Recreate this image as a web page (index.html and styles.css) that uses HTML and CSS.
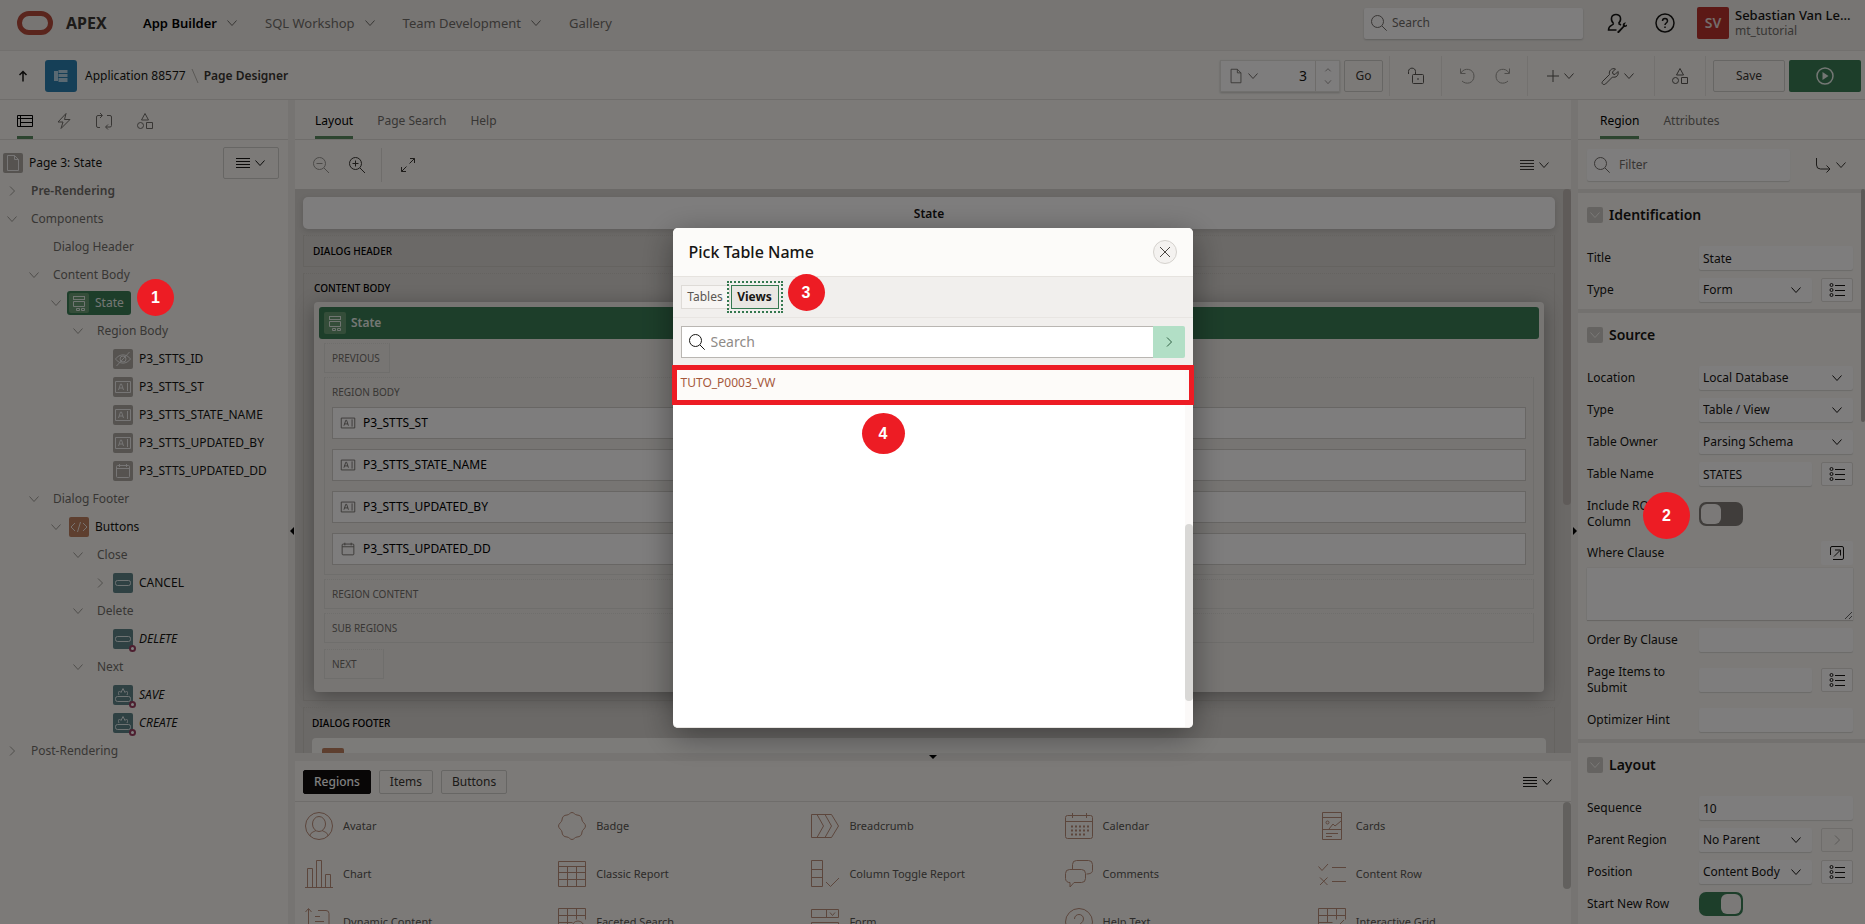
FILE: index.html
```html
<!DOCTYPE html>
<html lang="en">
<head>
<meta charset="utf-8">
<title>Page Designer</title>
<link rel="stylesheet" href="styles.css">
</head>
<body>
<svg class="defs" aria-hidden="true">
  <symbol id="chev" viewBox="0 0 12 12"><path d="M1.500 3.500l4.500 5 4.500-5"/></symbol>
  <symbol id="chev-r" viewBox="0 0 12 12"><path d="M4 1.500l4.500 4.500-4.500 4.500"/></symbol>
  <symbol id="chev-u" viewBox="0 0 12 12"><path d="M2 8l4-4 4 4"/></symbol>
  <symbol id="search" viewBox="0 0 16 16"><circle cx="6.500" cy="6.500" r="6"/><path d="M11 11l4.700 4.700"/></symbol>
  <symbol id="menu" viewBox="0 0 14 12"><path d="M0 1.500h14M0 4.500h14M0 7.500h14M0 10.500h14"/></symbol>
  <symbol id="shapes" viewBox="0 0 18 18"><path d="M9 1.500l3.500 6.500h-7zM10.500 10.500h6v6h-6z"/><circle cx="4.500" cy="13.500" r="3"/></symbol>
  <symbol id="list" viewBox="0 0 16 16"><circle cx="2.500" cy="3" r="1.500"/><circle cx="2.500" cy="8" r="1.500"/><circle cx="2.500" cy="13" r="1.500"/><path d="M6 3.500h10M6 8.500h10M6 13.500h10"/></symbol>
  <symbol id="t-form" viewBox="0 0 20 20"><path d="M4 3.500h12M4 6.500h12M4.500 3v4M15.500 3v4M4.500 8.500h11v5h-11zM7.500 15.500h3v2h-3zM12.500 15.500h3v2h-3z"/></symbol>
  <symbol id="t-text" viewBox="0 0 20 20"><path d="M2.500 4.500h15v11h-15zM14.500 6v8M5.500 13l2-6h1l2 6M6 11h4"/></symbol>
  <symbol id="t-hide" viewBox="0 0 20 20"><path d="M2.500 10c4-5.500 11-5.500 15 0-4 5.500-11 5.500-15 0zM3.500 17L16.500 3"/><circle cx="10" cy="10" r="3"/></symbol>
  <symbol id="t-date" viewBox="0 0 20 20"><path d="M4.500 4.500h11a1 1 0 0 1 1 1v10a1 1 0 0 1-1 1h-11a1 1 0 0 1-1-1v-10a1 1 0 0 1 1-1zM3.500 7.500h13M6.500 3v3M13.500 3v3"/></symbol>
  <symbol id="t-code" viewBox="0 0 20 20"><path d="M6 6l-4 4 4 4M14 6l4 4-4 4M11.500 5l-3 10"/></symbol>
  <symbol id="t-btn" viewBox="0 0 20 20"><rect x="2.500" y="7.500" width="15" height="5" rx="2"/></symbol>
  <symbol id="t-hot" viewBox="0 0 20 20"><rect x="2.500" y="11.500" width="15" height="5" rx="2"/><path d="M6 10c-1-2-.5-3 .5-4l1.500 1.500L10 3.500l2 4L13.500 6c1 1 1.500 2 .5 4"/></symbol>
  <symbol id="t-page" viewBox="0 0 20 20"><path d="M4.500 2.500h7l4 4v11h-11zM11.500 2.500v4h4"/></symbol>
</svg>

<div class="app">
  <header class="top">
    <svg class="logo" viewBox="0 0 36 24"><rect x="2.500" y="2.500" width="31" height="19" rx="9.500"/></svg>
    <span class="brand">APEX</span>
    <nav class="mainnav">
      <a href="#" class="on">App Builder<svg class="i12"><use href="#chev"/></svg></a>
      <a href="#">SQL Workshop<svg class="i12"><use href="#chev"/></svg></a>
      <a href="#">Team Development<svg class="i12"><use href="#chev"/></svg></a>
      <a href="#">Gallery</a>
    </nav>
    <label class="topsearch"><svg class="i16"><use href="#search"/></svg><input type="text" placeholder="Search" aria-label="Search"></label>
    <button class="plain admin" aria-label="Administration"><svg class="i20" viewBox="0 0 20 20"><path class="mid" d="M6.500 10.500C3 7 4 1.500 9 1.500s6 5.500 2.500 9M6.500 10.500c0 2-5 1.500-5 6.500h8M11.500 10.500l2.500 1.500"/><path class="fill" d="M10 19l6-6c-1-2 1-4 3-3.500l-1.500 2 1 1 2-1.500c.3 2-1.500 3.500-3.200 3l-5.800 6.500z"/></svg></button>
    <button class="plain help" aria-label="Help"><svg class="i20" viewBox="0 0 20 20"><circle class="mid" cx="10" cy="10" r="9"/><path class="mid" d="M7.500 8c0-3.500 5-3.500 5 0 0 2-2.500 2-2.500 4M10 13.500v1.500"/></svg></button>
    <div class="user"><span class="avatar">SV</span><span class="who"><b>Sebastian Van Le...</b><small>mt_tutorial</small></span></div>
  </header>

  <div class="bar">
    <button class="plain up" aria-label="Up"><svg class="i12" viewBox="0 0 12 12"><path class="mid" d="M6 11.500V1.500M2.500 5L6 1.500 9.500 5"/></svg></button>
    <span class="appicon"><svg viewBox="0 0 16 14"><rect x="1" y="2" width="4" height="10"/><rect x="5.500" y="1" width="9" height="3"/><rect x="5.500" y="5" width="9" height="3"/><rect x="5.500" y="9" width="9" height="4"/></svg></span>
    <a href="#" class="crumb">Application 88577</a>
    <svg class="slash" viewBox="0 0 8 16"><path d="M1 1l6 14"/></svg>
    <b class="crumb">Page Designer</b>
    <div class="tools">
      <div class="pagesel">
        <button class="plain" aria-label="Page"><svg class="i18"><use href="#t-page"/></svg><svg class="i12"><use href="#chev"/></svg></button>
        <input type="text" value="3" aria-label="Page number">
        <span class="spin"><svg class="i8"><use href="#chev-u"/></svg><svg class="i8"><use href="#chev"/></svg></span>
      </div>
      <button class="btn go">Go</button>
      <span class="tgroup w52"><svg class="i18" viewBox="0 0 18 18"><rect x="5.500" y="7.500" width="11" height="9" rx="1"/><path d="M8.500 7V4.500c0-4.500-7-4.500-7 0V7M11 11v2"/></svg></span>
      <span class="tgroup w86 faint"><svg class="i18" viewBox="0 0 18 18"><path d="M2.500 1.500v5h5M3 6c3-6 13-4.500 13 3s-8 9-12 5"/></svg><svg class="i18" viewBox="0 0 18 18"><path d="M15.500 1.500v5h-5M15 6C12 0 2 1.500 2 9s8 9 12 5"/></svg></span>
      <span class="tgroup w127"><span><svg class="i12" viewBox="0 0 12 12"><path d="M6 0v12M0 6h12"/></svg><svg class="i12"><use href="#chev"/></svg></span><span><svg class="i18" viewBox="0 0 18 18"><path d="M1.500 14.500l7-7c-1-3.500 2-7 6-5.500l-3 3 .5 2 2 .5 3-3c1 4-2 6.500-5.500 5.500l-7 7c-2 1.500-4.500-.5-3-2.500z"/></svg><svg class="i12"><use href="#chev"/></svg></span></span>
      <span class="tgroup w51"><svg class="i18"><use href="#shapes"/></svg></span>
      <span class="tgroup w8"></span>
      <button class="btn save">Save</button>
      <button class="run" aria-label="Run"><svg class="i18" viewBox="0 0 18 18"><circle class="mid" cx="9" cy="9" r="8"/><path class="fill" d="M6.500 5l6 4-6 4z"/></svg></button>
    </div>
  </div>

  <div class="panes">
    <aside class="left">
      <div class="tabs icons">
        <button class="on" aria-label="Rendering"><svg class="i16" viewBox="0 0 16 16"><path d="M.5 2.500h15v11H.500zM.5 5.500h15M3.500 2.500v11M3.500 9.500h12"/></svg></button>
        <button aria-label="Dynamic Actions"><svg class="i16" viewBox="0 0 16 16"><path d="M10 .5L2 9h5l-2 6.500L14 6.500H8.500z"/></svg></button>
        <button aria-label="Processing"><svg class="i18" viewBox="0 0 18 18"><path d="M5 15.500H3a1.500 1.500 0 0 1-1.500-1.500V5A1.500 1.500 0 0 1 3 3.500h4M5 1l2.500 2.500L5 6M12 3.500h3A1.500 1.500 0 0 1 16.500 5v8.500A1.500 1.500 0 0 1 15 15h-4M13 12.500L10.500 15l2.500 2.500"/></svg></button>
        <button aria-label="Shared Components"><svg class="i18"><use href="#shapes"/></svg></button>
      </div>
      <div class="tree">
        <div class="treehead"><span class="ic gray"><svg><use href="#t-page"/></svg></span>Page 3: State<button class="btn menu" aria-label="Menu"><svg class="ham"><use href="#menu"/></svg><svg class="i12"><use href="#chev"/></svg></button></div>
        <div class="n l1"><svg class="tg"><use href="#chev-r"/></svg><span class="t semi">Pre-Rendering</span></div>
        <div class="n l1"><svg class="tg"><use href="#chev"/></svg><span class="t">Components</span></div>
        <div class="n l2"><span class="tg"></span><span class="t">Dialog Header</span></div>
        <div class="n l2"><svg class="tg"><use href="#chev"/></svg><span class="t">Content Body</span></div>
        <div class="n l3"><svg class="tg"><use href="#chev"/></svg><span class="sel"><span class="ic lgreen"><svg><use href="#t-form"/></svg></span>State</span></div>
        <div class="n l4"><svg class="tg"><use href="#chev"/></svg><span class="t">Region Body</span></div>
        <div class="n l5"><span class="tg"></span><span class="ic gray"><svg><use href="#t-hide"/></svg></span>P3_STTS_ID</div>
        <div class="n l5"><span class="tg"></span><span class="ic gray"><svg><use href="#t-text"/></svg></span>P3_STTS_ST</div>
        <div class="n l5"><span class="tg"></span><span class="ic gray"><svg><use href="#t-text"/></svg></span>P3_STTS_STATE_NAME</div>
        <div class="n l5"><span class="tg"></span><span class="ic gray"><svg><use href="#t-text"/></svg></span>P3_STTS_UPDATED_BY</div>
        <div class="n l5"><span class="tg"></span><span class="ic gray"><svg><use href="#t-date"/></svg></span>P3_STTS_UPDATED_DD</div>
        <div class="n l2"><svg class="tg"><use href="#chev"/></svg><span class="t">Dialog Footer</span></div>
        <div class="n l3"><svg class="tg"><use href="#chev"/></svg><span class="ic orange"><svg><use href="#t-code"/></svg></span>Buttons</div>
        <div class="n l4"><svg class="tg"><use href="#chev"/></svg><span class="t">Close</span></div>
        <div class="n l5"><svg class="tg"><use href="#chev-r"/></svg><span class="ic teal"><svg><use href="#t-btn"/></svg></span>CANCEL</div>
        <div class="n l4"><svg class="tg"><use href="#chev"/></svg><span class="t">Delete</span></div>
        <div class="n l5"><span class="tg"></span><span class="ic teal cond"><svg><use href="#t-btn"/></svg></span><i>DELETE</i></div>
        <div class="n l4"><svg class="tg"><use href="#chev"/></svg><span class="t">Next</span></div>
        <div class="n l5"><span class="tg"></span><span class="ic teal cond"><svg><use href="#t-hot"/></svg></span><i>SAVE</i></div>
        <div class="n l5"><span class="tg"></span><span class="ic teal cond"><svg><use href="#t-hot"/></svg></span><i>CREATE</i></div>
        <div class="n l1"><svg class="tg"><use href="#chev-r"/></svg><span class="t">Post-Rendering</span></div>
      </div>
    </aside>
    <div class="split"><svg class="i8" viewBox="0 0 8 8"><path class="fill" d="M6 0v8L2 4z"/></svg></div>

    <main class="center">
      <div class="tabs">
        <button class="on">Layout</button><button>Page Search</button><button>Help</button>
      </div>
      <div class="toolbar">
        <button class="plain dim" aria-label="Zoom out"><svg class="i18" viewBox="0 0 18 18"><circle cx="7.500" cy="7.500" r="6"/><path d="M12 12l5 5M4.500 7.500h6"/></svg></button>
        <button class="plain" aria-label="Zoom in"><svg class="i18" viewBox="0 0 18 18"><circle cx="7.500" cy="7.500" r="6"/><path d="M12 12l5 5M4.500 7.500h6M7.500 4.500v6"/></svg></button>
        <span class="vr"></span>
        <button class="plain" aria-label="Expand"><svg class="i16" viewBox="0 0 16 16"><path d="M10 1.500h4.500V6M14.500 1.500l-5 5M6 14.500H1.500V10M1.500 14.500l5-5"/></svg></button>
        <button class="plain end" aria-label="Menu"><svg class="ham"><use href="#menu"/></svg><svg class="i12"><use href="#chev"/></svg></button>
      </div>
      <div class="canvas">
        <div class="sheet">
          <div class="pagetitle">State</div>
          <div class="slot">DIALOG HEADER</div>
          <div class="slot body">
            <span>CONTENT BODY</span>
            <div class="card">
              <div class="cardhead"><span class="ic big lgreen"><svg><use href="#t-form"/></svg></span>State</div>
              <div class="cardin">
                <div class="sub small">PREVIOUS</div>
                <div class="sub items">
                  <span>REGION BODY</span>
                  <div class="item"><svg class="i18"><use href="#t-text"/></svg>P3_STTS_ST</div>
                  <div class="item"><svg class="i18"><use href="#t-text"/></svg>P3_STTS_STATE_NAME</div>
                  <div class="item"><svg class="i18"><use href="#t-text"/></svg>P3_STTS_UPDATED_BY</div>
                  <div class="item"><svg class="i18"><use href="#t-date"/></svg>P3_STTS_UPDATED_DD</div>
                </div>
                <div class="sub">REGION CONTENT</div>
                <div class="sub">SUB REGIONS</div>
                <div class="sub small next">NEXT</div>
              </div>
            </div>
          </div>
          <div class="slot foot"><span>DIALOG FOOTER</span><div class="footcard"><span class="ic big orange"></span></div></div>
        </div>
        <div class="thumb"></div>
      </div>
      <div class="hsplit"><svg class="i8" viewBox="0 0 8 8"><path class="fill" d="M0 2h8L4 6z"/></svg></div>
      <section class="gallery">
        <div class="galhead">
          <button class="btn on">Regions</button><button class="btn">Items</button><button class="btn">Buttons</button>
          <button class="plain end" aria-label="Menu"><svg class="ham"><use href="#menu"/></svg><svg class="i12"><use href="#chev"/></svg></button>
        </div>
        <div class="galbody">
          <div class="grid">
            <div class="g"><svg viewBox="0 0 28 28"><circle cx="14" cy="14" r="13.500"/><ellipse cx="14" cy="12" rx="6.500" ry="7.500"/><path d="M5 24c0-3 3-4 6-5.500M23 24c0-3-3-4-6-5.500"/></svg>Avatar</div>
            <div class="g"><svg viewBox="0 0 28 28"><path d="M14 .5c2 0 3 2.500 5 2.500 3 0 5 2 5 5 0 2 3.500 3.500 3.500 6S24 18 24 20c0 3-2 5-5 5-2 0-3 2.500-5 2.500S11 25 9 25c-3 0-5-2-5-5 0-2-3.500-3.500-3.500-6S4 10 4 8c0-3 2-5 5-5 2 0 3-2.500 5-2.500z"/></svg>Badge</div>
            <div class="g"><svg viewBox="0 0 28 28"><path d="M.5 2.500h20l7 11.500-7 11.500H.500zM6 2.500L12.500 14 6 25.500M14 2.500L20.500 14 14 25.500"/></svg>Breadcrumb</div>
            <div class="g"><svg viewBox="0 0 28 28"><rect x=".5" y="3.500" width="27" height="23" rx="2"/><path d="M.5 9.500h27M7.500 1v5M21.500 1v5"/><path class="dots" d="M6 14.500h18M6 18.500h18M6 22.500h14"/></svg>Calendar</div>
            <div class="g"><svg viewBox="0 0 28 28"><path d="M4.500.5h19v27h-19zM4.500 5.500h19M4.500 17.500h19M8 21.500h12M8 24.500h6M11 17l4-5 2 2 6-5"/><circle cx="9.500" cy="10.500" r="1.500"/></svg>Cards</div>
            <div class="g"><svg viewBox="0 0 28 28"><path d="M0 27.500h28M2.500 27V8.500h5V27M11.500 27V.500h5V27M20.500 27V14.500h5V27"/></svg>Chart</div>
            <div class="g"><svg viewBox="0 0 28 28"><path d="M.5 1.500h27v25H.500zM.5 6.500h27M.5 12.500h27M.5 19.500h27M9.500 6.500v20M18.500 6.500v20"/></svg>Classic Report</div>
            <div class="g"><svg viewBox="0 0 28 28"><path d="M.5.5h11v26H.500zM.5 9.500h11M.5 17.500h11M15 22l4.500 4.500L28 18"/></svg>Column Toggle Report</div>
            <div class="g"><svg viewBox="0 0 28 28"><path d="M7.500 9.500v-5a4 4 0 0 1 4-4h12a4 4 0 0 1 4 4v6c0 2-2 3.500-6 3.500"/><path d="M4.500 9.500h12a4 4 0 0 1 4 4v5a4 4 0 0 1-4 4H9l-4 4.500v-4.500a4 4 0 0 1-4.500-4v-5a4 4 0 0 1 4-4z"/></svg>Comments</div>
            <div class="g"><svg viewBox="0 0 28 28"><path d="M.5 6.500L4 10.500l6-6.500M14 7.500h14M2 17.500l7.500 7.500M9.500 17.500L2 25M14 21.500h14"/></svg>Content Row</div>
            <div class="g"><svg viewBox="0 0 28 28"><path d="M3.500 28V1M.5 4l3-3.500 3 3.500M13 2.500h8a3 3 0 0 1 3 3V28M10 8.500h5M10 13.500h9"/></svg>Dynamic Content</div>
            <div class="g"><svg viewBox="0 0 28 28"><path d="M.5.5h27v11M.5.5v27M.5 7.500h27M.5 14.500h14M9.500.5v27M18.500.5v11"/><circle cx="20" cy="19" r="6"/></svg>Faceted Search</div>
            <div class="g"><svg viewBox="0 0 28 28"><path d="M.5 1.500h27v8H.500zM.5 14.500h27v8H.500zM15.500 1.500v8M19 4.500l2.500 3 2.500-3"/></svg>Form</div>
            <div class="g"><svg viewBox="0 0 28 28"><circle cx="14" cy="14" r="13.500"/><path d="M9.500 11c0-6 9-6 9 0 0 4-4.500 4-4.500 8"/></svg>Help Text</div>
            <div class="g"><svg viewBox="0 0 28 28"><path d="M.5.5h27v11M.5.5v27M.5 7.500h27M.5 14.500h14M9.500.5v14M18.500.5v11M18 20l8-8"/></svg>Interactive Grid</div>
          </div>
          <div class="thumb"></div>
        </div>
      </section>
    </main>
    <div class="split"><svg class="i8" viewBox="0 0 8 8"><path class="fill" d="M2 0v8l4-4z"/></svg></div>

    <aside class="right">
      <div class="tabs"><button class="on">Region</button><button>Attributes</button></div>
      <div class="toolbar filterbar">
        <label class="filter"><svg class="i16"><use href="#search"/></svg><input type="text" placeholder="Filter" aria-label="Filter"></label>
        <button class="plain end" aria-label="Go to group"><svg class="i16" viewBox="0 0 16 16"><path d="M1.500 1v7a4 4 0 0 0 4 4H15M11.500 8.500L15 12l-3.500 3.500"/></svg><svg class="i12"><use href="#chev"/></svg></button>
      </div>
      <div class="props">
        <section>
          <h2><span class="fold"><svg class="i12"><use href="#chev"/></svg></span>Identification</h2>
          <div class="row"><label for="f1">Title</label><input id="f1" type="text" value="State"></div>
          <div class="row"><label for="f2">Type</label><span class="selw"><select id="f2"><option>Form</option></select><svg class="i12"><use href="#chev"/></svg></span><button class="ib" aria-label="Pick type"><svg class="i16"><use href="#list"/></svg></button></div>
        </section>
        <section>
          <h2><span class="fold"><svg class="i12"><use href="#chev"/></svg></span>Source</h2>
          <div class="row"><label for="f3">Location</label><span class="selw"><select id="f3"><option>Local Database</option></select><svg class="i12"><use href="#chev"/></svg></span></div>
          <div class="row"><label for="f4">Type</label><span class="selw"><select id="f4"><option>Table / View</option></select><svg class="i12"><use href="#chev"/></svg></span></div>
          <div class="row"><label for="f5">Table Owner</label><span class="selw"><select id="f5"><option>Parsing Schema</option></select><svg class="i12"><use href="#chev"/></svg></span></div>
          <div class="row"><label for="f6">Table Name</label><input id="f6" type="text" value="STATES"><button class="ib" aria-label="Pick table"><svg class="i16"><use href="#list"/></svg></button></div>
          <div class="row tall"><label for="f7">Include ROWID Column</label><input id="f7" type="checkbox" class="switch"></div>
          <div class="row where"><label for="f8">Where Clause</label><span class="gap"></span><button class="ib soft" aria-label="Open code editor"><svg class="i16" viewBox="0 0 16 16"><path d="M4 14.500h9a1.500 1.500 0 0 0 1.500-1.500V3A1.500 1.500 0 0 0 13 1.500H3A1.500 1.500 0 0 0 1.500 3v7M5 11.500l6-6M6 5h5.500v5.500"/></svg></button></div>
          <textarea id="f8"></textarea>
          <div class="row"><label for="f9">Order By Clause</label><input id="f9" type="text"></div>
          <div class="row tall"><label for="f10">Page Items to Submit</label><input id="f10" type="text"><button class="ib" aria-label="Pick items"><svg class="i16"><use href="#list"/></svg></button></div>
          <div class="row"><label for="f11">Optimizer Hint</label><input id="f11" type="text"></div>
        </section>
        <section>
          <h2><span class="fold"><svg class="i12"><use href="#chev"/></svg></span>Layout</h2>
          <div class="row"><label for="f12">Sequence</label><input id="f12" type="text" value="10"></div>
          <div class="row"><label for="f13">Parent Region</label><span class="selw"><select id="f13"><option>No Parent</option></select><svg class="i12"><use href="#chev"/></svg></span><button class="ib off" aria-label="Go to parent"><svg class="i12"><use href="#chev-r"/></svg></button></div>
          <div class="row"><label for="f14">Position</label><span class="selw"><select id="f14"><option>Content Body</option></select><svg class="i12"><use href="#chev"/></svg></span><button class="ib" aria-label="Pick position"><svg class="i16"><use href="#list"/></svg></button></div>
          <div class="row"><label for="f15">Start New Row</label><input id="f15" type="checkbox" class="switch" checked></div>
        </section>
        <div class="thumb"></div>
      </div>
    </aside>
  </div>
</div>

<div class="overlay">
  <div class="dialog" role="dialog" aria-labelledby="dt">
    <div class="dhead"><h1 id="dt">Pick Table Name</h1><button class="close" aria-label="Close"><svg class="i12" viewBox="0 0 12 12"><path d="M1 1l10 10M11 1L1 11"/></svg></button></div>
    <div class="dtabs"><button>Tables</button><button class="on">Views</button></div>
    <div class="dsearch"><label><svg class="i16"><use href="#search"/></svg><input type="text" placeholder="Search" aria-label="Search views"></label><button aria-label="Go"><svg class="i12"><use href="#chev-r"/></svg></button></div>
    <div class="dbody"><a href="#" class="result">TUTO_P0003_VW</a><div class="dtrack"><span></span></div></div>
    <div class="hilite"></div>
    <span class="mark m3">3</span>
    <span class="mark m4">4</span>
  </div>
  <span class="mark m1">1</span>
  <span class="mark m2">2</span>
</div>
</body>
</html>
```
FILE: styles.css
```css
:root {
  --panel: #f8f5f1;
  --header: #eeebe7;
  --line: #dedbd7;
  --ink: #161513;
  --muted: #716d69;
  --field: #fdfafb;
  --green: #3a7c55;
  --red: #ed1c24;
}
* { box-sizing: border-box; }
body {
  margin: 0;
  height: 100vh;
  overflow: hidden;
  font: 12px/16px "Noto Sans", "Open Sans", sans-serif;
  color: var(--ink);
  background: var(--panel);
}
button, input, select, textarea { font: inherit; color: inherit; margin: 0; }
button { cursor: pointer; }
a { color: inherit; text-decoration: none; }
svg { fill: none; stroke: currentColor; display: block; flex: none; }
.fill { fill: currentColor; stroke: none; }
.mid { stroke-width: 1.500; }
.defs { position: absolute; width: 0; height: 0; }
.i8 { width: 8px; height: 8px; }
.i12 { width: 12px; height: 12px; }
.i16 { width: 16px; height: 16px; }
.i18 { width: 18px; height: 18px; }
.i20 { width: 20px; height: 20px; }
.ham { width: 14px; height: 12px; }
.dim { opacity: .5; }
.plain { border: 0; background: none; padding: 0; display: flex; align-items: center; gap: 4px; }
.end { margin-left: auto; }
.btn {
  border: 1px solid #cfccc8;
  border-radius: 2px;
  background: transparent;
  padding: 0;
}

.app { height: 100%; display: flex; flex-direction: column; }

/* top header */
.top { height: 51px; flex: none; display: flex; align-items: center; padding: 0 14px 4px 17px; background: var(--header); border-bottom: 1px solid #e4e0dc; }
.logo { width: 36px; height: 24px; stroke: #b54a3b; stroke-width: 5; }
.brand { margin-left: 13px; width: 45px; font-size: 16px; font-weight: 700; color: #3a3632; }
.mainnav { display: flex; margin-left: 32px; gap: 27px; font-size: 13px; color: var(--muted); }
.mainnav a { display: flex; align-items: center; gap: 9px; }
.mainnav .on { color: #000; font-weight: 600; }
.mainnav .on svg { color: var(--muted); }
.topsearch { margin-left: auto; width: 219px; height: 31px; display: flex; align-items: center; gap: 5px; padding: 0 7px; background: var(--field); border-radius: 2px; box-shadow: 0 1px 2px #0003; }
.topsearch svg, .filter svg { color: var(--muted); }
.topsearch input, .filter input, .dsearch input { border: 0; outline: 0; background: none; flex: 1; min-width: 0; padding: 0; }
::placeholder { color: #6f6b67; opacity: 1; }
.admin { margin-left: 24px; }
.help { margin-left: 28px; }
.user { display: flex; margin-left: 22px; gap: 6px; width: 154px; }
.avatar { width: 32px; height: 32px; border-radius: 2px; background: #b8322d; color: #e8d8d4; display: grid; place-items: center; font-size: 14px; font-weight: 600; }
.who { display: flex; flex-direction: column; font-size: 12px; white-space: nowrap; }
.who b { font-weight: 500; font-size: 13px; }
.who small { font-size: 12px; color: var(--muted); }

/* breadcrumb bar */
.bar { height: 49px; flex: none; display: flex; align-items: center; padding: 2px 4px 0 17px; border-bottom: 1px solid var(--line); }
.appicon { width: 32px; height: 32px; margin: 0 8px 0 16px; border-radius: 3px; background: #2b7fae; display: grid; place-items: center; }
.appicon svg { width: 16px; height: 14px; fill: #b4d2e4; stroke: none; }
.crumb { font-weight: 400; }
b.crumb { font-weight: 600; color: #3a3632; }
.slash { width: 8px; height: 16px; margin: 0 5px; color: #b5b1ac; }
.tools { margin-left: auto; display: flex; align-items: center; height: 32px; }
.pagesel { width: 120px; height: 32px; display: flex; align-items: center; padding-left: 6px; background: var(--field); border: 1px solid #e3e0dc; box-shadow: 0 1px 2px #0003; }
.pagesel input { border: 0; background: none; width: 60px; padding: 0 8px 0 0; text-align: right; font-size: 14px; flex: 1; min-width: 0; }
.pagesel .plain { gap: 2px; color: var(--muted); }
.spin { width: 24px; height: 100%; border-left: 1px solid #dcd9d5; display: flex; flex-direction: column; justify-content: space-evenly; align-items: center; color: var(--muted); }
.go { width: 39px; height: 32px; margin: 0 6px 0 4px; color: #3a3632; }
.tgroup { height: 40px; border-left: 1px solid #e6e2de; display: flex; align-items: center; justify-content: center; color: #5a5652; }
.faint { color: #9b9792; }
.tgroup span { display: flex; align-items: center; gap: 4px; }
.w52 { width: 52px; }
.w86 { width: 86px; gap: 18px; }
.w127 { width: 127px; gap: 26px; }
.w51 { width: 51px; }
.w8 { width: 8px; }
.save { width: 72px; height: 32px; color: #3a3632; }
.run { width: 72px; height: 32px; margin-left: 4px; border: 0; border-radius: 2px; background: var(--green); color: #e8efe9; display: grid; place-items: center; padding: 0; }

/* panes */
.panes { flex: 1; min-height: 0; display: grid; grid-template-columns: 288px 7px minmax(0, 1fr) 7px 287px; }
.left, .right, .center { min-height: 0; display: flex; flex-direction: column; overflow: hidden; }
.split { background: #ece9e5; display: grid; place-items: center; padding-top: 38px; }
.split svg { color: #000; }
.tabs { height: 40px; flex: none; display: flex; gap: 24px; padding: 0 20px; border-bottom: 1px solid var(--line); }
.right .tabs { padding-left: 22px; }
.tabs button { border: 0; border-bottom: 3px solid transparent; background: none; padding: 5px 0 0; color: var(--muted); }
.tabs .on { border-color: #5a8a60; color: #000; }
.tabs.icons { padding-left: 17px; gap: 23px; }
.toolbar { height: 49px; flex: none; display: flex; align-items: center; padding: 0 21px 0 17px; gap: 18px; color: #3a3632; }
.vr { width: 1px; height: 34px; background: var(--line); }
.toolbar .vr { margin-left: -3px; }

/* tree */
.tree { flex: 1; padding-top: 9px; }
.treehead { display: flex; align-items: center; height: 28px; padding: 0 9px 0 3px; gap: 6px; }
.menu { width: 56px; height: 32px; margin-left: auto; display: flex; align-items: center; justify-content: center; gap: 4px; }
.n { height: 28px; display: flex; align-items: center; white-space: nowrap; }
.tg { width: 12px; height: 12px; margin: 0 7px 0 6px; color: #a09c97; }
.l2 { padding-left: 22px; } .l3 { padding-left: 44px; } .l4 { padding-left: 66px; } .l5 { padding-left: 88px; }
.n .t { margin-left: 6px; color: var(--muted); }
.n .semi { font-weight: 600; }
.n > .ic { margin-right: 6px; }
.ic { width: 20px; height: 20px; border-radius: 2px; display: grid; place-items: center; color: #fff; flex: none; position: relative; }
.ic svg { width: 20px; height: 20px; opacity: .8; }
.gray { background: #aca6a1; }
.lgreen { background: #699a72; }
.orange { background: #bd7f5e; }
.teal { background: #5f8287; }
.big { width: 22px; height: 22px; }
.cond::after { content: ""; box-sizing: border-box; position: absolute; right: -3px; bottom: -3px; width: 7px; height: 7px; border: 2px solid #9a3f60; border-radius: 50%; background: #fff; }
.sel { display: flex; align-items: center; gap: 6px; height: 24px; margin-left: -2px; padding: 0 7px 0 2px; border-radius: 3px; background: var(--green); color: #e8efe9; }

/* layout canvas */
.canvas { flex: 1; min-height: 0; overflow: hidden; background: #d6d2ce; position: relative; padding: 8px 16px 0 8px; }
.thumb { position: absolute; right: 0; top: 0; width: 8px; border-radius: 4px; background: #b9b3ae; }
.canvas .thumb { height: 316px; background: #bfb7b3; }
.pagetitle { height: 32px; padding-top: 2px; border-radius: 5px; background: var(--field); box-shadow: 0 2px 6px #0002; display: grid; place-items: center; font-weight: 600; }
.slot { margin-top: 6px; padding: 7px 9px; min-height: 30px; border: 1px solid #cbc6c1; border-top-style: dotted; font-size: 10px; font-weight: 500; color: #000; }
.slot.body { margin-top: 6px; padding: 6px 10px 8px; }
.card { margin-top: 6px; height: 390px; border-radius: 4px; background: #eeebe7; padding: 5px; box-shadow: 0 4px 20px #0005; font-weight: 400; }
.cardhead { height: 32px; border-radius: 3px; background: var(--green); color: #e8efe9; display: flex; align-items: center; gap: 5px; padding-left: 5px; font-size: 12px; font-weight: 600; }
.cardin { padding: 4px 5px 0; display: flex; flex-direction: column; gap: 4px; color: var(--muted); }
.sub { border: 1px solid #dfdcd8; border-top-style: dotted; padding: 6px 7px; height: 30px; font-size: 10px; line-height: 16px; }
.small { width: 66px; }
.next { width: 60px; margin-top: 2px; }
.items { height: auto; padding-bottom: 9px; }
.item { height: 32px; display: flex; align-items: center; gap: 6px; padding-left: 6px; border: 1px solid #d0cdc9; background: var(--field); color: #000; font-size: 12px; margin-top: 10px; }
.item:nth-of-type(1) { margin-top: 7px; }
.item svg { color: var(--muted); }
.foot { height: 80px; padding: 7px 8px; }
.footcard { margin-top: 7px; background: #f8f6f3; height: 60px; border-radius: 4px; padding: 10px; }
.hsplit { height: 8px; flex: none; background: #ece9e5; display: grid; place-items: center; }
.hsplit svg { color: #000; }

/* gallery */
.gallery { height: 163px; flex: none; display: flex; flex-direction: column; }
.galhead { height: 41px; flex: none; border-bottom: 1px solid var(--line); display: flex; align-items: center; gap: 8px; padding: 1px 18px 0 8px; }
.galhead .btn { height: 24px; padding: 0 10px; color: #3a3632; }
.galhead .on { background: #100c0c; border-color: #100c0c; color: #fff; font-weight: 500; }
.galbody { flex: 1; position: relative; overflow: hidden; }
.galbody .thumb { height: 87px; background: #c5c1bc; }
.grid { display: grid; grid-template-columns: repeat(5, 1fr); grid-auto-rows: 48px; padding: 0 0 0 10px; }
.g { display: flex; align-items: center; gap: 10px; font-size: 11px; color: #5a5652; }
.g svg { width: 28px; height: 28px; color: #b98c78; }
.dots { stroke-width: 2; stroke-dasharray: 2 2; }

/* property editor */
.filterbar { padding: 0 18px 0 9px; }
.filter { width: 203px; height: 32px; background: var(--field); border-radius: 2px; box-shadow: 0 1px 1px #0002; display: flex; align-items: center; gap: 9px; padding: 0 7px; }
.props { flex: 1; min-height: 0; overflow: hidden; position: relative; }
.props .thumb { width: 4px; height: 233px; border-radius: 2px; }
.props section { border-top: 4px solid #e6e2de; padding: 0 12px 3px 9px; }
h2 { margin: 0; padding: 14px 0 19px; font-size: 14px; line-height: 16px; font-weight: 600; display: flex; align-items: center; gap: 6px; }
.fold { width: 16px; height: 16px; border-radius: 2px; background: #cbc7c2; color: #f6f3f0; display: grid; place-items: center; }
.row { display: flex; align-items: center; min-height: 32px; }
.row.tall { min-height: 48px; }
.row.where { min-height: 30px; }
.row label { width: 112px; flex: none; padding-right: 16px; }
.where label { padding: 0; }
.gap { flex: 1; }
.row input[type=text], select { flex: 1; min-width: 0; height: 24px; border: 0; border-radius: 2px; background: var(--field); padding: 0 4px; box-shadow: 0 1px 1px #0002; appearance: none; }
.selw { flex: 1; min-width: 0; display: grid; align-items: center; }
.selw > * { grid-area: 1 / 1; }
.selw svg { justify-self: end; margin-right: 10px; }
.ib { width: 32px; height: 24px; margin-left: 9px; flex: none; border: 1px solid #dedbd7; background: var(--field); border-radius: 2px; padding: 0; display: grid; place-items: center; }
.soft { border-color: transparent; }
.off { color: #b5b1ac; background: none; }
textarea { display: block; width: 100%; height: 52px; margin: 0 0 4px; border: 0; background: var(--field); box-shadow: 0 0 1px #0003, 0 1px 1px #0002; }
.switch { appearance: none; width: 44px; height: 24px; border-radius: 7px; background: #807b76; padding: 2px; display: flex; }
.switch::before { content: ""; width: 20px; height: 20px; border-radius: 6px; background: #f6f3f0; }
.switch:checked { background: var(--green); justify-content: flex-end; }

/* dialog */
.overlay { position: fixed; inset: 0; background: rgba(0, 0, 0, .5); display: flex; justify-content: center; align-items: flex-start; padding-top: 228px; }
.dialog { position: relative; width: 520px; height: 500px; border-radius: 5px; background: #fff; box-shadow: 0 8px 32px #0006; display: flex; flex-direction: column; }
.dhead { height: 48px; flex: none; display: flex; align-items: center; justify-content: space-between; padding: 0 16px; background: #fcfbf9; border-radius: 5px 5px 0 0; }
h1 { margin: 0; font-size: 16px; font-weight: 500; line-height: 20px; }
.close { width: 24px; height: 24px; border-radius: 50%; border: 1px solid #d5d2ce; background: #f4f2f0; padding: 0; display: grid; place-items: center; color: #4a4642; }
.dtabs { height: 42px; flex: none; display: flex; align-items: center; background: #f1efed; border-top: 1px solid #e6e3df; border-bottom: 1px solid #e8e5e2; padding: 0 8px; gap: 1px; }
.dtabs button { height: 24px; width: 49px; border: 1px solid #dedbd7; background: #f7f5f3; padding: 0; color: #5a5652; }
.dtabs .on { width: 48px; border: 1px solid #34784f; background: #e9e6e2; color: #161513; font-weight: 700; outline: 2px dotted #34784f; outline-offset: 2px; }
.dsearch { flex: none; display: flex; padding: 8px 8px 7px; background: #f1efed; }
.dsearch label { flex: 1; height: 32px; display: flex; align-items: center; gap: 6px; padding: 0 7px; background: #fff; border: 1px solid #b9b6b2; border-right: 0; font-size: 14px; }
.dsearch ::placeholder { color: #8f8b87; }
.dsearch button { width: 32px; height: 32px; border: 0; border-radius: 0 2px 2px 0; background: #b2dfc6; padding: 0; display: grid; place-items: center; color: #2f5f42; }
.dbody { flex: 1; display: flex; border-bottom: 1px solid #e8e5e2; border-radius: 0 0 5px 5px; }
.result { flex: 1; height: 40px; padding: 10px 8px; background: #fdfbf9; color: #a5583c; }
.dtrack { width: 8px; background: #fbf9f8; border-radius: 0 0 5px 0; padding-top: 159px; }
.dtrack span { display: block; height: 177px; border-radius: 4px; background: #d9d8d6; }
.hilite { position: absolute; left: -1px; right: -1px; top: 137px; height: 40px; border: 5px solid var(--red); }
.mark { position: absolute; width: 37px; height: 37px; border-radius: 50%; background: var(--red); color: #fff; display: grid; place-items: center; font: 700 16px/16px "Liberation Sans", Arial, sans-serif; }
.m1 { left: 137px; top: 279px; }
.m2 { right: 175px; top: 492px; width: 47px; height: 47px; }
.m3 { left: 115px; top: 46px; }
.m4 { left: 189px; top: 185px; width: 43px; height: 41px; }
```
